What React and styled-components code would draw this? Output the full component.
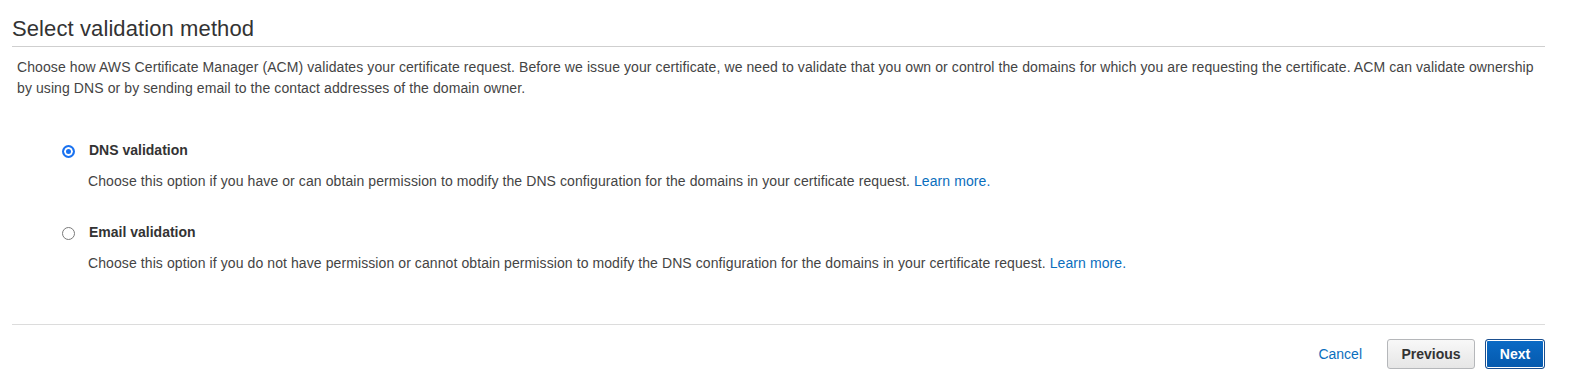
import styled, { createGlobalStyle } from 'styled-components';

const GlobalStyle = createGlobalStyle`
  body {
    margin: 0;
    background: #fff;
    font-family: "Liberation Sans", Arial, Helvetica, sans-serif;
    color: #444;
  }
`;

const options = [
  {
    id: 'dns',
    label: 'DNS validation',
    text: 'Choose this option if you have or can obtain permission to modify the DNS configuration for the domains in your certificate request.',
    checked: true,
  },
  {
    id: 'email',
    label: 'Email validation',
    text: 'Choose this option if you do not have permission or cannot obtain permission to modify the DNS configuration for the domains in your certificate request.',
    checked: false,
  },
];

const App = () => {
  return (
    <>
      <GlobalStyle />
      <Page>
        <Heading>Select validation method</Heading>
        <Intro>
          Choose how AWS Certificate Manager (ACM) validates your certificate request. Before we issue your
          certificate, we need to validate that you own or control the domains for which you are requesting the
          certificate. ACM can validate ownership by using DNS or by sending email to the contact addresses of the
          domain owner.
        </Intro>
        <OptionList>
          {options.map((opt) => (
            <Option key={opt.id}>
              <Radio $checked={opt.checked} />
              <OptionBody>
                <OptionLabel>{opt.label}</OptionLabel>
                <OptionText>
                  {opt.text} <Link href="#!">Learn more.</Link>
                </OptionText>
              </OptionBody>
            </Option>
          ))}
        </OptionList>
        <Footer>
          <CancelLink href="#!">Cancel</CancelLink>
          <Button>Previous</Button>
          <Button $primary>Next</Button>
        </Footer>
      </Page>
    </>
  );
};

const Page = styled.div`
  padding: 15px 29px 0 12px;
`;

const Heading = styled.h2`
  margin: 0;
  padding-bottom: 4px;
  border-bottom: 1px solid #cfcfcf;
  font-size: 22px;
  line-height: 27px;
  font-weight: 400;
  letter-spacing: 0.1px;
  color: #333;
`;

const Intro = styled.p`
  margin: 10px 0 0;
  padding-left: 5px;
  font-size: 14px;
  line-height: 21px;
  letter-spacing: 0.09px;
`;

const OptionList = styled.div`
  display: flex;
  flex-direction: column;
  gap: 30px;
  margin-top: 41px;
  padding-left: 50px;
`;

const Option = styled.div`
  display: flex;
  align-items: flex-start;
`;

const Radio = styled.span`
  flex: none;
  box-sizing: border-box;
  width: 13px;
  height: 13px;
  margin-top: 5px;
  border-radius: 50%;
  border: ${(p) => (p.$checked ? '2px solid #1a72f0' : '1px solid #7a7a7a')};
  background: ${(p) => (p.$checked ? '#1a72f0' : '#fff')};
  box-shadow: ${(p) => (p.$checked ? 'inset 0 0 0 2px #fff' : 'none')};
`;

const OptionBody = styled.div`
  margin-left: 13px;
`;

const OptionLabel = styled.div`
  font-size: 14px;
  line-height: 21px;
  font-weight: 700;
  color: #333;
  margin-left: 1px;
`;

const OptionText = styled.div`
  margin-top: 10px;
  font-size: 14px;
  line-height: 21px;
  letter-spacing: 0.09px;
`;

const Link = styled.a`
  color: #0a6ebd;
  text-decoration: none;
`;

const Footer = styled.div`
  display: flex;
  justify-content: flex-end;
  align-items: center;
  margin-top: 50px;
  padding-top: 14px;
  border-top: 1px solid #dcdcdc;
`;

const CancelLink = styled.a`
  color: #0a6ebd;
  font-size: 14px;
  text-decoration: none;
  margin-right: 25px;
`;

const Button = styled.button`
  box-sizing: border-box;
  height: 30px;
  padding: 0;
  margin-left: ${(p) => (p.$primary ? '10px' : '0')};
  border-radius: 3px;
  font-family: "Liberation Sans", Arial, Helvetica, sans-serif;
  font-size: 14px;
  font-weight: 700;
  cursor: pointer;
  color: ${(p) => (p.$primary ? '#fff' : '#333')};
  border: 1px solid ${(p) => (p.$primary ? '#1b4f8f' : '#b5b7ba')};
  background: ${(p) =>
    p.$primary
      ? 'linear-gradient(#0b6bc6, #0559ad)'
      : 'linear-gradient(#f8f8f8, #e6e6e6)'};
  box-shadow: ${(p) => (p.$primary ? 'inset 0 0 0 1px #ffffff' : 'none')};
  width: ${(p) => (p.$primary ? '60px' : '88px')};
`;

export default App;
